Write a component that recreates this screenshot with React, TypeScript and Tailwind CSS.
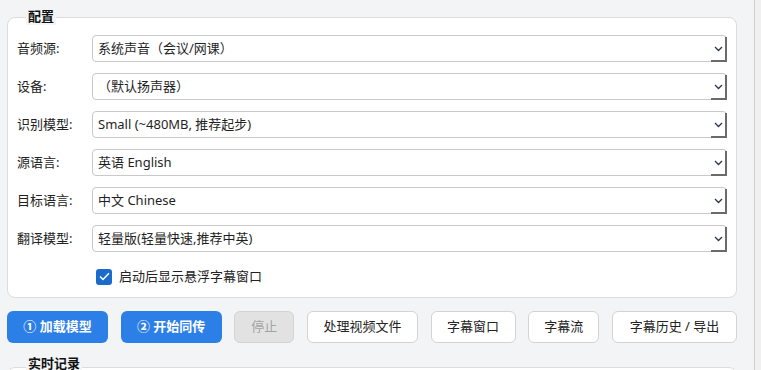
import React from "react";

const font = { fontFamily: '"Noto Sans", "Noto Sans CJK SC", sans-serif' };

function Select({ value }: { value: string }) {
  return (
    <div className="relative flex h-[27px] flex-1 items-center rounded-[4px] border border-[#c9c9c9] bg-white pl-[5px] text-[13px] text-[#1f1f1f]">
      <span className="flex-1 truncate">{value}</span>
      <div className="flex h-[25px] w-[16px] items-center justify-center self-end border-r-2 border-b-2 border-r-[#6b6b6b] border-b-[#6b6b6b] -mr-px -mb-px mt-[2px]">
        <svg width="9" height="6" viewBox="0 0 9 6" fill="none">
          <path d="M1 1 L4.5 4.5 L8 1" stroke="#2a3550" strokeWidth="1.3" />
        </svg>
      </div>
    </div>
  );
}

const rows: [string, string][] = [
  ["音频源:", "系统声音（会议/网课）"],
  ["设备:", "（默认扬声器）"],
  ["识别模型:", "Small (~480MB, 推荐起步)"],
  ["源语言:", "英语 English"],
  ["目标语言:", "中文 Chinese"],
  ["翻译模型:", "轻量版(轻量快速,推荐中英)"],
];

export default function App() {
  return (
    <div className="flex h-[370px] w-[761px] overflow-hidden bg-[#f3f4f6]" style={font}>
      <div className="flex-1 pl-[7px] pr-[17px] pt-[17px]">
        <div className="relative rounded-[8px] border border-[#dcdcdc] bg-white pb-[10px] pl-[9px] pr-[9px] pt-[17px]">
          <div className="absolute left-[18px] top-[-11px] bg-[#f3f4f6] px-[2px] text-[13px] font-bold leading-[18px] text-[#111]">
            配置
          </div>
          <div className="flex flex-col gap-[11px]">
            {rows.map(([label, value]) => (
              <div key={label} className="flex items-center">
                <div className="w-[75px] text-[13px] text-[#222]">{label}</div>
                <Select value={value} />
              </div>
            ))}
          </div>
          <div className="ml-[79px] mt-[15px] flex items-center gap-[7px]">
            <div className="flex h-[16px] w-[16px] items-center justify-center rounded-[3px] bg-[#1b6bcc]">
              <svg width="11" height="9" viewBox="0 0 11 9" fill="none">
                <path d="M1 4.5 L4 7.5 L10 1.2" stroke="white" strokeWidth="1.5" />
              </svg>
            </div>
            <span className="text-[13px] text-[#222]">启动后显示悬浮字幕窗口</span>
          </div>
        </div>

        <div className="mt-[13px] flex justify-between">
          <button className="h-[32px] w-[101px] rounded-[6px] bg-[#2d7fe8] text-[13px] font-semibold text-white">
            ① 加载模型
          </button>
          <button className="h-[32px] w-[101px] rounded-[6px] bg-[#2d7fe8] text-[13px] font-semibold text-white">
            ② 开始同传
          </button>
          <button className="h-[32px] w-[60px] rounded-[6px] border border-[#d3d3d3] bg-[#e2e2e2] text-[13px] text-[#a3a3a3]">
            停止
          </button>
          <button className="h-[32px] w-[111px] rounded-[6px] border border-[#d3d3d3] bg-white text-[13px] text-[#222]">
            处理视频文件
          </button>
          <button className="h-[32px] w-[85px] rounded-[6px] border border-[#d3d3d3] bg-white text-[13px] text-[#222]">
            字幕窗口
          </button>
          <button className="h-[32px] w-[71px] rounded-[6px] border border-[#d3d3d3] bg-white text-[13px] text-[#222]">
            字幕流
          </button>
          <button className="h-[32px] w-[125px] rounded-[6px] border border-[#d3d3d3] bg-white text-[13px] text-[#222]">
            字幕历史 / 导出
          </button>
        </div>

        <div className="relative mt-[24px] h-[200px] rounded-[8px] border border-[#dcdcdc] bg-white">
          <div className="absolute left-[18px] top-[-14px] bg-[#f3f4f6] px-[2px] text-[13px] font-bold leading-[18px] text-[#111]">
            实时记录
          </div>
        </div>
      </div>
      <div className="w-[7px] border-l border-[#cfcfcf] bg-[#f0f0f0]" />
    </div>
  );
}
